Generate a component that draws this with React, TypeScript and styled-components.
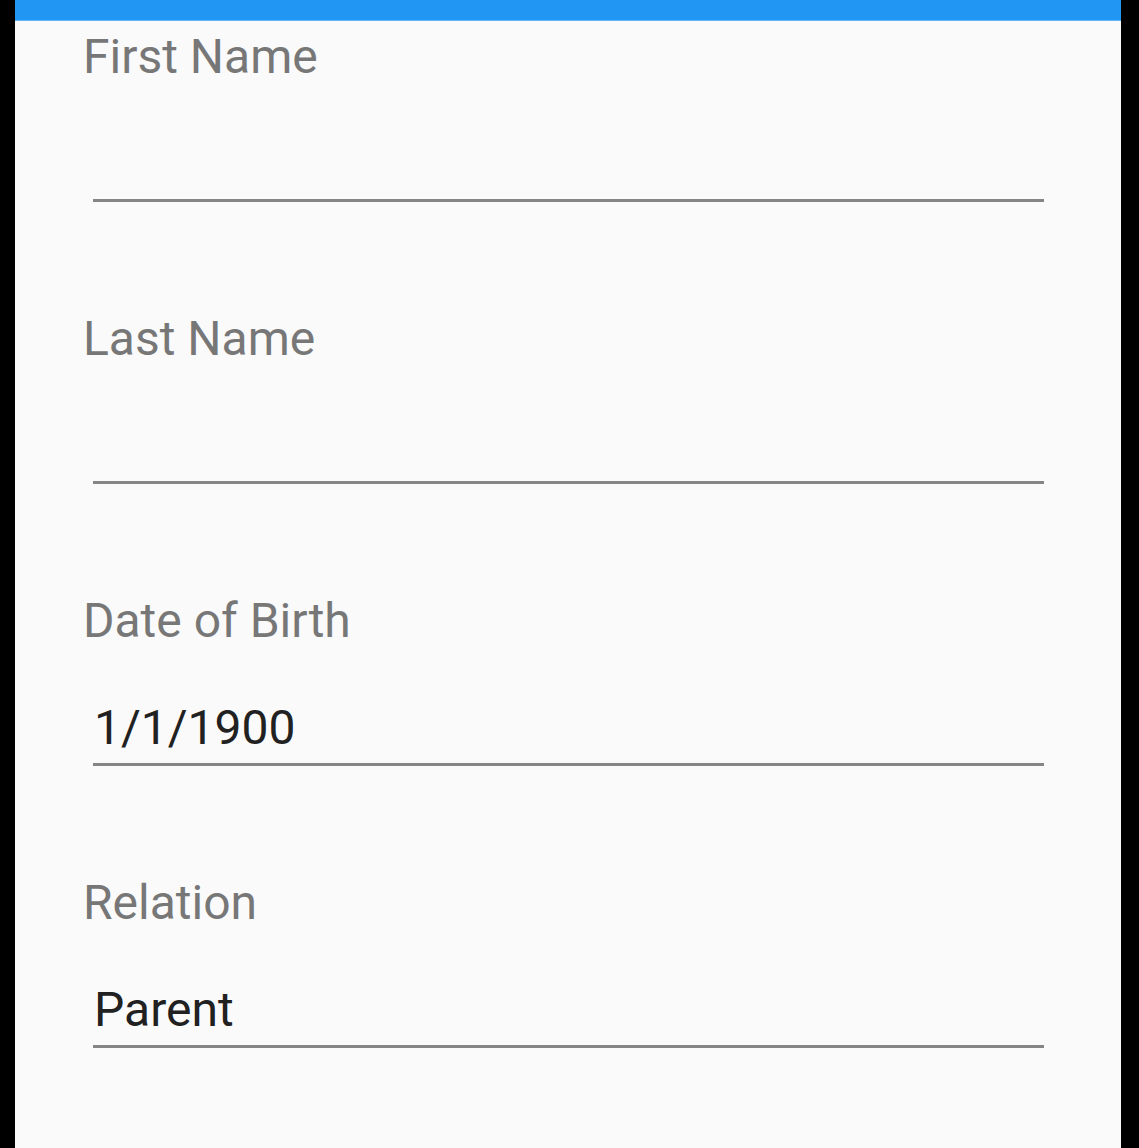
import React from "react";
import styled, { createGlobalStyle } from "styled-components";

const Global = createGlobalStyle`
  html, body { margin: 0; padding: 0; background: #000; }
  body { font-family: Roboto, "Noto Sans", sans-serif; }
`;

const Frame = styled.div`
  width: 1139px;
  height: 1148px;
  background: #000;
  display: flex;
  padding: 0 18px 0 15px;
  box-sizing: border-box;
`;

const Screen = styled.div`
  flex: 1;
  background: #fafafa;
  display: flex;
  flex-direction: column;
`;

const TopBar = styled.div`
  height: 20px;
  background: #2196f3;
  border-bottom: 1px solid #64b5f6;
  flex-shrink: 0;
`;

const Form = styled.div`
  display: flex;
  flex-direction: column;
  gap: 109px;
  padding: 8px 0 0 68px;
`;

const Field = styled.div`
  display: flex;
  flex-direction: column;
`;

const Label = styled.div`
  font-size: 48px;
  line-height: 56px;
  height: 56px;
  color: #777777;
  margin-bottom: 51px;
`;

const InputBox = styled.div`
  margin-left: 10px;
  width: 951px;
  height: 63px;
  border-bottom: 3px solid #858585;
`;

const Value = styled.div`
  font-size: 48px;
  line-height: 56px;
  color: #212121;
  margin-left: 1px;
`;

const fields = [
  { label: "First Name", value: "" },
  { label: "Last Name", value: "" },
  { label: "Date of Birth", value: "1/1/1900" },
  { label: "Relation", value: "Parent" },
];

export default function App() {
  return (
    <>
      <Global />
      <Frame>
        <Screen>
          <TopBar />
          <Form>
            {fields.map((f) => (
              <Field key={f.label}>
                <Label>{f.label}</Label>
                <InputBox>
                  <Value>{f.value}</Value>
                </InputBox>
              </Field>
            ))}
          </Form>
        </Screen>
      </Frame>
    </>
  );
}
